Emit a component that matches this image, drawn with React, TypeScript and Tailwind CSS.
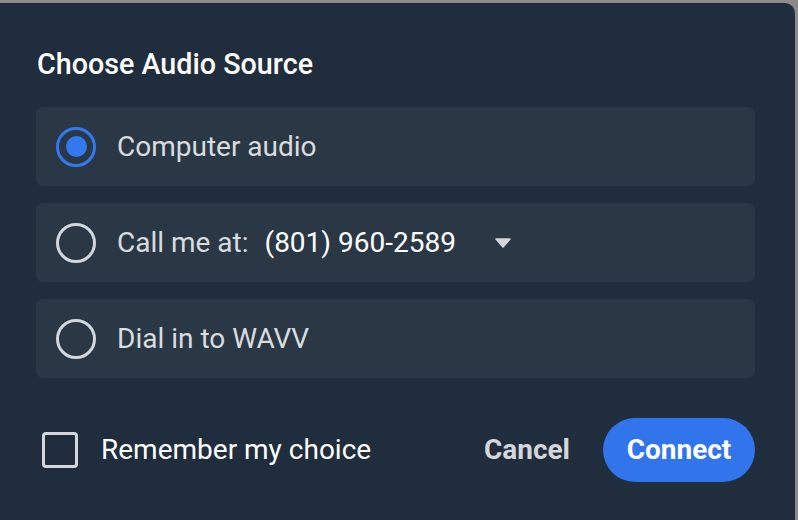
import React from "react";

function Radio({ checked }: { checked?: boolean }) {
  return checked ? (
    <div className="w-[40px] h-[40px] rounded-full border-[3.5px] border-[#3478f0] flex items-center justify-center shrink-0">
      <div className="w-[21px] h-[21px] rounded-full bg-[#3478f0]" />
    </div>
  ) : (
    <div className="w-[40px] h-[40px] rounded-full border-[3.5px] border-[#d4d6d9] shrink-0" />
  );
}

export default function App() {
  return (
    <div
      className="w-[798px] h-[520px] bg-[#8a8a8a] pt-[3px] overflow-hidden"
      style={{ fontFamily: "Roboto, 'Noto Sans', sans-serif" }}
    >
      <div className="w-[795px] h-[540px] bg-[#1f2d3d] rounded-tr-[10px] pl-[36px] pr-[40px] pt-[43px]">
        <div className="text-[28.7px] leading-[36px] font-medium text-white pl-[1px]">
          Choose Audio Source
        </div>
        <div className="mt-[25px] flex flex-col gap-[17px]">
          <div className="h-[79px] rounded-[7px] bg-[#2a3846] flex items-center pl-[20px]">
            <Radio checked />
            <span className="ml-[21px] text-[28px] text-[#d9dcdf]">Computer audio</span>
          </div>
          <div className="h-[79px] rounded-[7px] bg-[#2a3846] flex items-center pl-[20px]">
            <Radio />
            <span className="ml-[21px] text-[28px] text-[#d9dcdf]">Call me at:</span>
            <span className="ml-[16px] text-[28px] text-white">(801) 960-2589</span>
            <svg className="ml-[39px] mt-[1px]" width="16" height="10" viewBox="0 0 16 10">
              <path d="M1 1 L15 1 L8 9 Z" fill="#d4d6d9" stroke="#d4d6d9" strokeWidth="1.5" strokeLinejoin="round" />
            </svg>
          </div>
          <div className="h-[79px] rounded-[7px] bg-[#2a3846] flex items-center pl-[20px]">
            <Radio />
            <span className="ml-[21px] text-[28px] text-[#d9dcdf]">Dial in to WAVV</span>
          </div>
        </div>
        <div className="mt-[40px] flex items-center">
          <div className="ml-[6px] w-[36px] h-[36px] rounded-[4px] border-[3.5px] border-[#d4d6d9]" />
          <span className="ml-[23px] text-[28px] text-white">Remember my choice</span>
          <div className="flex-1" />
          <span className="text-[28px] font-bold text-[#d4d6d9] mr-[33px]">Cancel</span>
          <div className="w-[152px] h-[64px] rounded-full bg-[#3174ec] flex items-center justify-center text-[28px] font-bold text-white">
            Connect
          </div>
        </div>
      </div>
    </div>
  );
}
